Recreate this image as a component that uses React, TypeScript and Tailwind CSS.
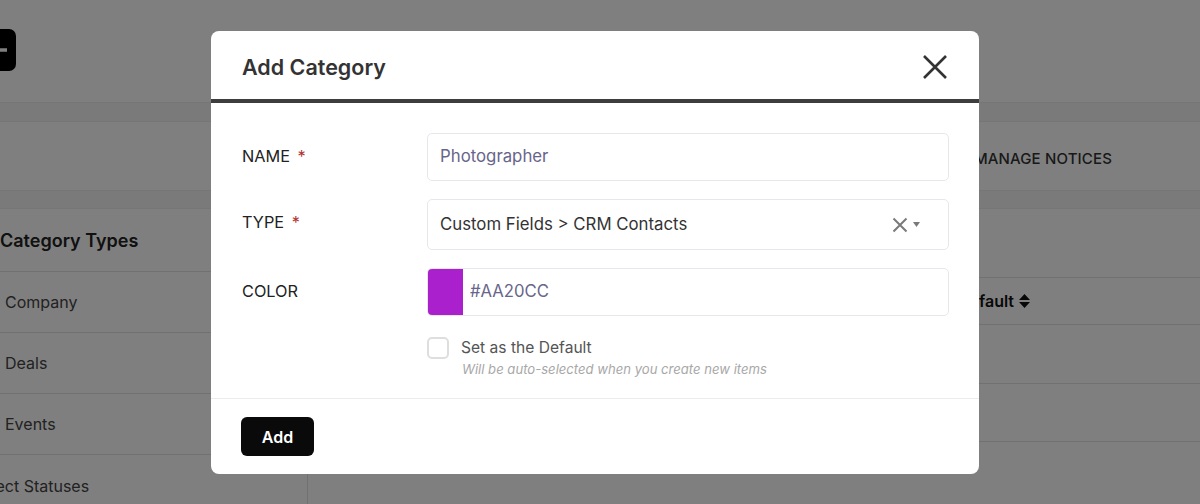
import React from "react";

function CloseIcon() {
  return (
    <svg width="26" height="26" viewBox="0 0 26 26" fill="none">
      <path d="M2 2L24 24M24 2L2 24" stroke="#333333" strokeWidth="2.6" strokeLinecap="butt" />
    </svg>
  );
}

function ClearIcon() {
  return (
    <svg width="16" height="16" viewBox="0 0 16 16" fill="none">
      <path d="M1.5 1.5L14.5 14.5M14.5 1.5L1.5 14.5" stroke="#7a7a7a" strokeWidth="2" />
    </svg>
  );
}

function Caret() {
  return (
    <svg width="7" height="5" viewBox="0 0 7 5">
      <path d="M0 0H7L3.5 5Z" fill="#7a7a7a" />
    </svg>
  );
}

function SortIcon() {
  return (
    <svg width="11" height="14" viewBox="0 0 11 14">
      <path d="M5.5 0L11 6H0Z M0 8H11L5.5 14Z" fill="#111" />
    </svg>
  );
}

function Background() {
  return (
    <div className="flex flex-col w-[1200px] h-[504px] bg-[#f4f4f4] overflow-hidden">
      <div className="shrink-0 h-[103px] bg-white border-b border-[#ececec] pt-[29px] flex">
        <div className="ml-[-22px] w-[38px] h-[42px] rounded-[7px] bg-black flex items-center justify-center text-white">
          <svg width="20" height="20" viewBox="0 0 20 20">
            <path d="M0 10H20M10 0V20" stroke="white" strokeWidth="3.5" />
          </svg>
        </div>
      </div>
      <div className="shrink-0 h-[18px]" />
      <div className="shrink-0 h-[70px] pt-[6px] bg-white border-y border-[#ececec] flex items-center justify-end pr-[88px]">
        <span className="text-[15px] font-medium text-[#333] tracking-[0.01em]">MANAGE NOTICES</span>
      </div>
      <div className="shrink-0 h-[17px]" />
      <div className="shrink-0 h-[320px] bg-white border-t border-[#ececec] flex">
        <div className="w-[308px] border-r border-[#e2e2e2] flex flex-col">
          <div className="shrink-0 h-[63px] border-b border-[#e2e2e2] flex items-center">
            <span className="text-[18px] font-semibold text-[#222]">Category Types</span>
          </div>
          {["Company", "Deals", "Events"].map((t) => (
            <div key={t} className="shrink-0 h-[61px] border-b border-[#e2e2e2] flex items-center pl-[5px]">
              <span className="text-[16px] text-[#444]">{t}</span>
            </div>
          ))}
          <div className="shrink-0 h-[61px] flex items-center overflow-hidden">
            <span className="text-[16px] text-[#444] ml-[-34px] whitespace-nowrap">Project Statuses</span>
          </div>
        </div>
        <div className="flex-1 flex flex-col">
          <div className="shrink-0 h-[69px] border-b border-[#e2e2e2]" />
          <div className="shrink-0 h-[47px] border-b border-[#e2e2e2] grid grid-cols-[650px_1fr] items-center">
            <span className="pl-[20px] text-[16px] font-semibold text-[#111]">Name</span>
            <span className="flex items-center gap-[5px] text-[16px] font-semibold text-[#111]">
              Default <SortIcon />
            </span>
          </div>
          <div className="shrink-0 h-[59px] border-b border-[#e2e2e2]" />
          <div className="shrink-0 h-[58px] border-b border-[#e2e2e2]" />
        </div>
      </div>
    </div>
  );
}

export default function App() {
  return (
    <div className="relative w-[1200px] h-[504px] overflow-hidden font-['Inter','Noto_Sans',sans-serif]">
      <Background />
      <div className="absolute inset-0 bg-black/50" />
      <div className="absolute left-[211px] top-[31px] w-[768px] rounded-[8px] bg-white overflow-hidden">
        <div className="h-[72px] pt-[4px] pl-[31px] pr-[31px] flex items-center justify-between border-b-4 border-[#3d3d3d]">
          <h2 className="text-[21.5px] font-semibold text-[#333]">Add Category</h2>
          <button className="flex items-center justify-center">
            <CloseIcon />
          </button>
        </div>
        <div className="pl-[31px] pr-[30px] pt-[30px] pb-[20px] grid grid-cols-[185px_1fr] gap-y-[18px]">
          <div className="pt-[11px] leading-[24px] text-[16.3px] text-[#222]">
            NAME <span className="ml-[3px] text-[#b03535]">*</span>
          </div>
          <div className="h-[48px] border border-[#e6e6ec] rounded-[5px] flex items-center px-[12px] text-[16.8px] text-[#68658a]">
            Photographer
          </div>

          <div className="pt-[11px] leading-[24px] text-[16.3px] text-[#222]">
            TYPE <span className="ml-[3px] text-[#b03535]">*</span>
          </div>
          <div className="h-[51px] border border-[#e6e6ec] rounded-[5px] flex items-center pl-[12px] pr-[28px] text-[16.8px] text-[#333]">
            <span className="flex-1">Custom Fields &gt; CRM Contacts</span>
            <ClearIcon />
            <span className="ml-[5px] flex items-center">
              <Caret />
            </span>
          </div>

          <div className="pt-[11px] leading-[24px] text-[16.3px] text-[#222]">COLOR</div>
          <div className="h-[48px] border border-[#e6e6ec] rounded-[5px] flex items-stretch overflow-hidden">
            <div className="w-[35px] bg-[#AA20CC]" />
            <span className="flex items-center pl-[7px] text-[16.7px] text-[#68658a]">#AA20CC</span>
          </div>

          <div />
          <div className="mt-[3px] flex flex-col">
            <label className="flex items-center gap-[12px] h-[22px]">
              <span className="w-[22px] h-[22px] rounded-[5px] border-2 border-[#dedede] bg-white" />
              <span className="text-[15.6px] text-[#555] -mt-[1px]">Set as the Default</span>
            </label>
            <span className="mt-[1px] ml-[35px] h-[18px] leading-[18px] text-[13.1px] italic text-[#a8a8a8]">
              Will be auto-selected when you create new items
            </span>
          </div>
        </div>
        <div className="h-[76px] border-t border-[#ececec] flex items-center pl-[30px]">
          <button className="w-[73px] h-[39px] rounded-[6px] bg-[#0a0a0a] text-white text-[16px] font-semibold">
            Add
          </button>
        </div>
      </div>
    </div>
  );
}
